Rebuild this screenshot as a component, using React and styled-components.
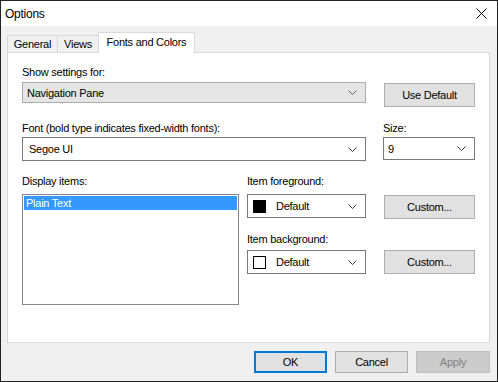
import React from 'react'
import styled, { createGlobalStyle } from 'styled-components'

const Global = createGlobalStyle`
  html, body { margin: 0; padding: 0; background: #f0f0f0; }
  body { font-family: "Liberation Sans", Arial, sans-serif; font-size: 11px; letter-spacing: -0.25px; color: #000; }
  * { box-sizing: border-box; }
`

const Window = styled.div`
  width: 498px;
  height: 382px;
  border: 1px solid #222;
  display: flex;
  flex-direction: column;
  background: #f0f0f0;
`

const TitleBar = styled.div`
  height: 25px;
  background: #fff;
  display: flex;
  align-items: center;
  justify-content: space-between;
  padding: 0 10px 0 4px;
  font-size: 12px;
`

const Body = styled.div`
  flex: 1;
  display: flex;
  flex-direction: column;
  padding: 7px 7px 0 6px;
`

const TabStrip = styled.div`
  display: flex;
  align-items: flex-end;
  height: 20px;
  margin-bottom: -1px;
  position: relative;
  z-index: 1;
`

const Tab = styled.div`
  width: ${p => p.$w}px;
  height: ${p => (p.$active ? 21 : 18)}px;
  margin-left: ${p => (p.$first ? 0 : -1)}px;
  border: 1px solid #d9d9d9;
  border-bottom: ${p => (p.$active ? 'none' : '1px solid #d9d9d9')};
  background: ${p => (p.$active ? '#fff' : '#f0f0f0')};
  display: flex;
  align-items: center;
  justify-content: center;
  padding-bottom: ${p => (p.$active ? 2 : 0)}px;
`

const Panel = styled.div`
  width: 483px;
  height: 291px;
  background: #fff;
  border: 1px solid #d9d9d9;
  padding: 12px 14px 0 14px;
  display: flex;
  flex-direction: column;
`

const Row = styled.div`
  display: flex;
  gap: ${p => p.$gap || 18}px;
  margin-top: ${p => p.$mt || 0}px;
`

const Column = styled.div`
  display: flex;
  flex-direction: column;
  width: ${p => p.$w}px;
  padding-top: ${p => p.$pt || 0}px;
`

const Label = styled.div`
  line-height: 15px;
  height: 15px;
  margin-top: ${p => p.$mt || 0}px;
  margin-bottom: ${p => p.$mb ?? 2}px;
  white-space: nowrap;
`

const Combo = styled.div`
  width: ${p => p.$w}px;
  height: ${p => p.$h || 23}px;
  border: 1px solid ${p => (p.$gray ? '#acacac' : '#7a7a7a')};
  background: ${p => (p.$gray ? '#e5e5e5' : '#fff')};
  display: flex;
  align-items: center;
  padding: 0 8px 0 ${p => p.$pl || 6}px;
  gap: 10px;
`

const ComboText = styled.span`
  flex: 1;
  white-space: nowrap;
`

const Swatch = styled.span`
  width: 13px;
  height: 13px;
  background: ${p => p.$color};
  border: 1px solid #000;
  flex: none;
`

const Button = styled.div`
  width: ${p => p.$w || 91}px;
  height: ${p => p.$h || 24}px;
  margin-top: ${p => p.$mt || 0}px;
  border: ${p => (p.$focus ? '2px solid #0078d7' : `1px solid ${p.$disabled ? '#bfbfbf' : '#adadad'}`)};
  background: ${p => (p.$disabled ? '#cccccc' : '#e1e1e1')};
  color: ${p => (p.$disabled ? '#838383' : '#000')};
  display: flex;
  align-items: center;
  justify-content: center;
  flex: none;
`

const ListBox = styled.div`
  width: 217px;
  height: 111px;
  border: 1px solid #828790;
  padding: 1px;
`

const ListItem = styled.div`
  height: 14px;
  line-height: 14px;
  padding-left: 2px;
  background: ${p => (p.$selected ? '#3399ff' : 'transparent')};
  color: ${p => (p.$selected ? '#fff' : '#000')};
`

const Footer = styled.div`
  display: flex;
  justify-content: flex-end;
  gap: 8px;
  padding-top: 8px;
`

const Chevron = ({ color = '#606060' }) => (
  <svg width="9" height="5" viewBox="0 0 9 5" style={{ flex: 'none' }}>
    <path d="M0.5 0.5 L4.5 4.5 L8.5 0.5" fill="none" stroke={color} strokeWidth="1" />
  </svg>
)

const CloseIcon = () => (
  <svg width="11" height="11" viewBox="0 0 11 11">
    <path d="M0.5 0.5 L10.5 10.5 M10.5 0.5 L0.5 10.5" stroke="#000" strokeWidth="1" />
  </svg>
)

export default function App() {
  return (
    <>
      <Global />
      <Window>
        <TitleBar>
          <span>Options</span>
          <CloseIcon />
        </TitleBar>
        <Body>
          <TabStrip>
            <Tab $w={51} $first>General</Tab>
            <Tab $w={42}>Views</Tab>
            <Tab $w={97} $active>Fonts and Colors</Tab>
          </TabStrip>
          <Panel>
            <Row $gap={18}>
              <Column $w={344}>
                <Label>Show settings for:</Label>
                <Combo $w={344} $h={21} $gray $pl={4}>
                  <ComboText>Navigation Pane</ComboText>
                  <Chevron />
                </Combo>
              </Column>
              <Column $w={91} $pt={18}>
                <Button $w={91} $h={24}>Use Default</Button>
              </Column>
            </Row>
            <Row $gap={17} $mt={14}>
              <Column $w={344}>
                <Label $mb={1}>Font (bold type indicates fixed-width fonts):</Label>
                <Combo $w={344} $h={24}>
                  <ComboText>Segoe UI</ComboText>
                  <Chevron color="#333" />
                </Combo>
              </Column>
              <Column $w={92}>
                <Label $mb={1}>Size:</Label>
                <Combo $w={92} $h={23} $pl={4}>
                  <ComboText>9</ComboText>
                  <Chevron color="#333" />
                </Combo>
              </Column>
            </Row>
            <Row $gap={8} $mt={13}>
              <Column $w={217}>
                <Label $mb={5}>Display items:</Label>
                <ListBox>
                  <ListItem $selected>Plain Text</ListItem>
                </ListBox>
              </Column>
              <Column $w={228}>
                <Label $mb={5}>Item foreground:</Label>
                <Row $gap={18}>
                  <Combo $w={120} $h={24} $pl={5}>
                    <Swatch $color="#000" />
                    <ComboText>Default</ComboText>
                    <Chevron color="#333" />
                  </Combo>
                  <Button $w={91} $h={24} $mt={1}>Custom...</Button>
                </Row>
                <Label $mb={3} $mt={13}>Item background:</Label>
                <Row $gap={18}>
                  <Combo $w={120} $h={24} $pl={5}>
                    <Swatch $color="#fff" />
                    <ComboText>Default</ComboText>
                    <Chevron color="#333" />
                  </Combo>
                  <Button $w={91} $h={24}>Custom...</Button>
                </Row>
              </Column>
            </Row>
          </Panel>
          <Footer>
            <Button $w={73} $h={22} $focus>OK</Button>
            <Button $w={73} $h={22}>Cancel</Button>
            <Button $w={74} $h={22} $disabled>Apply</Button>
          </Footer>
        </Body>
      </Window>
    </>
  )
}
